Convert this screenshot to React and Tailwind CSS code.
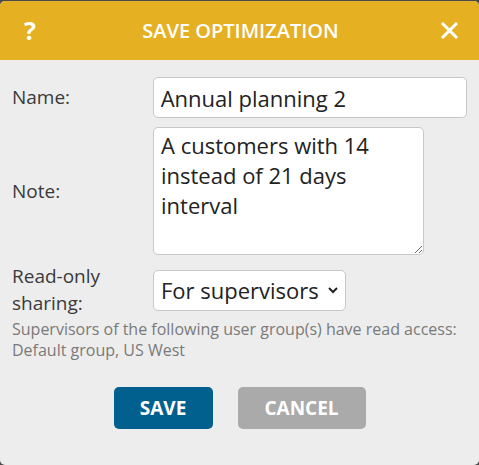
import React from "react";

export default function App() {
  return (
    <div className="w-[479px] h-[465px] bg-[#4a4a4a] pt-px" style={{ fontFamily: '"Open Sans", sans-serif' }}>
      <div className="h-[464px] rounded-[5px] overflow-hidden bg-[#ededed] flex flex-col">
        <div className="h-[59px] bg-[#e5b022] flex items-center justify-between pl-[24px] pr-[21px] text-white">
          <span className="text-[25px] font-bold w-[16px] leading-none">?</span>
          <span className="text-[20px] font-semibold">SAVE OPTIMIZATION</span>
          <svg width="17" height="17" viewBox="0 0 17 17">
            <path d="M2 2 L15 15 M15 2 L2 15" stroke="white" strokeWidth="3" strokeLinecap="square" />
          </svg>
        </div>
        <div className="px-[12px] pt-[17px] flex flex-col">
          <div className="flex items-center h-[41px]">
            <label className="w-[141px] text-[19px] text-[#3a3a3a]">Name:</label>
            <input
              className="w-[315px] h-[41px] bg-white border border-[#c8c8c8] rounded-[5px] px-[7px] text-[22px] text-[#222] outline-none"
              defaultValue="Annual planning 2"
            />
          </div>
          <div className="flex items-center mt-[9px]">
            <label className="w-[141px] text-[19px] text-[#3a3a3a]">Note:</label>
            <textarea
              className="w-[271px] h-[128px] bg-white border border-[#c8c8c8] rounded-[5px] px-[7px] py-[2px] text-[22px] leading-[30px] text-[#222] outline-none resize-y"
              defaultValue="A customers with 14 instead of 21 days interval"
            />
          </div>
          <div className="flex items-center mt-[8px]">
            <label className="w-[141px] text-[19px] leading-[27px] text-[#3a3a3a]">Read-only<br />sharing:</label>
            <div className="w-[193px] h-[41px] bg-white border border-[#c8c8c8] rounded-[5px] flex items-center justify-between pl-[7px] pr-[6px]">
              <span className="text-[22px] text-[#222]">For supervisors</span>
              <svg width="12" height="8" viewBox="0 0 12 8">
                <path d="M2 2 L6 6 L10 2" stroke="#222" strokeWidth="2" fill="none" />
              </svg>
            </div>
          </div>
          <p className="mt-[2px] text-[16px] leading-[21px] text-[#7a7a7a]">
            Supervisors of the following user group(s) have read access:<br />Default group, US West
          </p>
          <div className="flex justify-center gap-[25px] mt-[26px]">
            <button className="w-[99px] h-[42px] bg-[#02608f] rounded-[5px] text-white text-[19px] font-bold">SAVE</button>
            <button className="w-[128px] h-[42px] bg-[#aaaaaa] rounded-[5px] text-white text-[19px] font-bold">CANCEL</button>
          </div>
        </div>
      </div>
    </div>
  );
}
